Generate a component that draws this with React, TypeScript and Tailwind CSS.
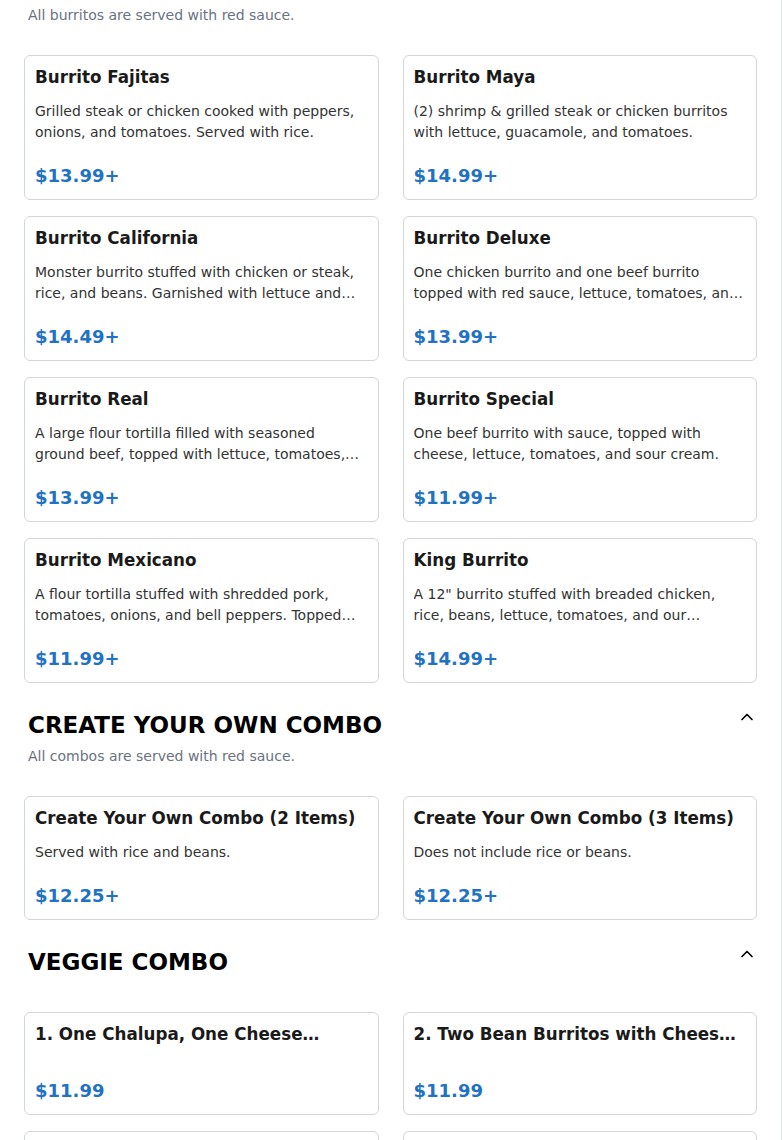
import { ChevronUp } from 'lucide-react'

type Item = { name: string; desc?: string; price: string }
type Section = { title: string; note?: string; items: Item[] }

const SECTIONS: Section[] = [
  {
    title: 'BURRITOS',
    note: 'All burritos are served with red sauce.',
    items: [
      { name: 'Burrito Fajitas', desc: 'Grilled steak or chicken cooked with peppers, onions, and tomatoes. Served with rice.', price: '$13.99+' },
      { name: 'Burrito Maya', desc: '(2) shrimp & grilled steak or chicken burritos with lettuce, guacamole, and tomatoes.', price: '$14.99+' },
      { name: 'Burrito California', desc: 'Monster burrito stuffed with chicken or steak, rice, and beans. Garnished with lettuce and sour cream.', price: '$14.49+' },
      { name: 'Burrito Deluxe', desc: 'One chicken burrito and one beef burrito topped with red sauce, lettuce, tomatoes, and sour cream.', price: '$13.99+' },
      { name: 'Burrito Real', desc: 'A large flour tortilla filled with seasoned ground beef, topped with lettuce, tomatoes, and cheese.', price: '$13.99+' },
      { name: 'Burrito Special', desc: 'One beef burrito with sauce, topped with cheese, lettuce, tomatoes, and sour cream.', price: '$11.99+' },
      { name: 'Burrito Mexicano', desc: 'A flour tortilla stuffed with shredded pork, tomatoes, onions, and bell peppers. Topped with cheese sauce.', price: '$11.99+' },
      { name: 'King Burrito', desc: 'A 12" burrito stuffed with breaded chicken, rice, beans, lettuce, tomatoes, and our signature sauce.', price: '$14.99+' },
    ],
  },
  {
    title: 'CREATE YOUR OWN COMBO',
    note: 'All combos are served with red sauce.',
    items: [
      { name: 'Create Your Own Combo (2 Items)', desc: 'Served with rice and beans.', price: '$12.25+' },
      { name: 'Create Your Own Combo (3 Items)', desc: 'Does not include rice or beans.', price: '$12.25+' },
    ],
  },
  {
    title: 'VEGGIE COMBO',
    items: [
      { name: '1. One Chalupa, One Cheese Enchilada, and One Bean Burrito', price: '$11.99' },
      { name: '2. Two Bean Burritos with Cheese Sauce', price: '$11.99' },
      { name: '3. Two Cheese Enchiladas', price: '$11.99' },
      { name: '4. One Bean Burrito and One Cheese Quesadilla', price: '$11.99' },
    ],
  },
]

function ItemCard({ item }: { item: Item }) {
  return (
    <div className="flex flex-col rounded-md border border-gray-300 bg-white px-2.5 pt-[11px] pb-2.5">
      <h3 className="line-clamp-1 text-[16.75px] font-bold leading-5 text-[#1a1a1a]">{item.name}</h3>
      <p className="mt-[14px] line-clamp-2 text-sm leading-[21px] text-[#333]">{item.desc}</p>
      <div className="mt-5 text-lg font-bold leading-[26px] text-[#2272c3]">{item.price}</div>
    </div>
  )
}

export default function App() {
  return (
    <div
      className="-mt-[32px] min-h-screen w-[782px] border-r border-gray-200 bg-white px-6"
      style={{ fontFamily: '"DejaVu Sans", Verdana, sans-serif' }}
    >
      {SECTIONS.map((section, i) => (
        <section key={section.title} className={i === 0 ? '' : 'mt-[26px]'}>
          <div className="pl-1">
            <div className="flex items-start justify-between">
              <h2 className="text-[23px] font-bold leading-8 text-black">{section.title}</h2>
              <ChevronUp size={20} strokeWidth={2} className="-mt-0.5 text-black" />
            </div>
            {section.note && (
              <p className="mt-[5px] text-sm leading-[21px] text-gray-500">{section.note}</p>
            )}
          </div>
          <div className={`grid grid-cols-2 gap-x-6 gap-y-4 ${section.note ? 'mt-[29px]' : 'mt-[34px]'}`}>
            {section.items.map((item) => (
              <ItemCard key={item.name} item={item} />
            ))}
          </div>
        </section>
      ))}
    </div>
  )
}
